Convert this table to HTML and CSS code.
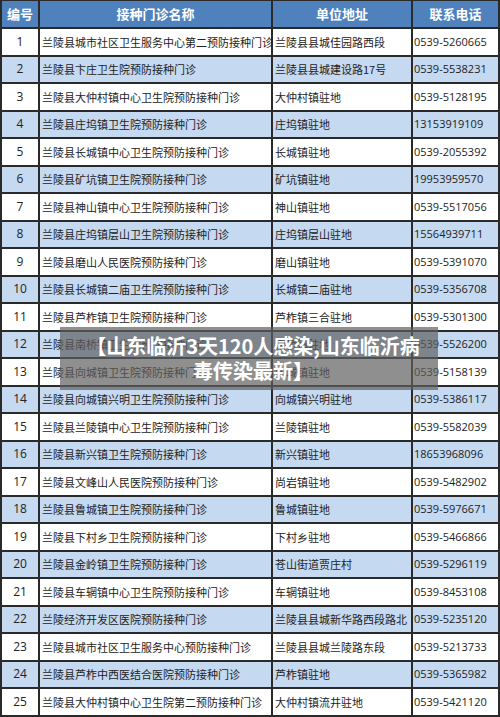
FILE: index.html
```html
<!DOCTYPE html>
<html lang="zh-CN">
<head>
    <meta charset="UTF-8">
    <meta name="viewport" content="width=device-width, initial-scale=1.0">
    <title>兰陵县预防接种门诊</title>
    <link rel="stylesheet" href="styles.css">
</head>
<body>
    <div class="page">
        <table class="clinics">
            <colgroup>
                <col class="c-no">
                <col class="c-name">
                <col class="c-addr">
                <col class="c-tel">
            </colgroup>
            <thead>
                <tr>
                    <th>编号</th>
                    <th>接种门诊名称</th>
                    <th>单位地址</th>
                    <th>联系电话</th>
                </tr>
            </thead>
            <tbody>
                <tr><td class="no">1</td><td>兰陵县城市社区卫生服务中心第二预防接种门诊</td><td>兰陵县县城佳园路西段</td><td class="tel">0539-5260665</td></tr>
                <tr><td class="no">2</td><td>兰陵县卞庄卫生院预防接种门诊</td><td>兰陵县县城建设路17号</td><td class="tel">0539-5538231</td></tr>
                <tr><td class="no">3</td><td>兰陵县大仲村镇中心卫生院预防接种门诊</td><td>大仲村镇驻地</td><td class="tel">0539-5128195</td></tr>
                <tr><td class="no">4</td><td>兰陵县庄坞镇卫生院预防接种门诊</td><td>庄坞镇驻地</td><td class="tel">13153919109</td></tr>
                <tr><td class="no">5</td><td>兰陵县长城镇中心卫生院预防接种门诊</td><td>长城镇驻地</td><td class="tel">0539-2055392</td></tr>
                <tr><td class="no">6</td><td>兰陵县矿坑镇卫生院预防接种门诊</td><td>矿坑镇驻地</td><td class="tel">19953959570</td></tr>
                <tr><td class="no">7</td><td>兰陵县神山镇中心卫生院预防接种门诊</td><td>神山镇驻地</td><td class="tel">0539-5517056</td></tr>
                <tr><td class="no">8</td><td>兰陵县庄坞镇层山卫生院预防接种门诊</td><td>庄坞镇层山驻地</td><td class="tel">15564939711</td></tr>
                <tr><td class="no">9</td><td>兰陵县磨山人民医院预防接种门诊</td><td>磨山镇驻地</td><td class="tel">0539-5391070</td></tr>
                <tr><td class="no">10</td><td>兰陵县长城镇二庙卫生院预防接种门诊</td><td>长城镇二庙驻地</td><td class="tel">0539-5356708</td></tr>
                <tr><td class="no">11</td><td>兰陵县芦柞镇卫生院预防接种门诊</td><td>芦柞镇三合驻地</td><td class="tel">0539-5301300</td></tr>
                <tr><td class="no">12</td><td>兰陵县南桥镇卫生院预防接种门诊</td><td>南桥镇驻地</td><td class="tel">0539-5526200</td></tr>
                <tr><td class="no">13</td><td>兰陵县向城镇卫生院预防接种门诊</td><td>向城镇驻地</td><td class="tel">0539-5158139</td></tr>
                <tr><td class="no">14</td><td>兰陵县向城镇兴明卫生院预防接种门诊</td><td>向城镇兴明驻地</td><td class="tel">0539-5386117</td></tr>
                <tr><td class="no">15</td><td>兰陵县兰陵镇中心卫生院预防接种门诊</td><td>兰陵镇驻地</td><td class="tel">0539-5582039</td></tr>
                <tr><td class="no">16</td><td>兰陵县新兴镇卫生院预防接种门诊</td><td>新兴镇驻地</td><td class="tel">18653968096</td></tr>
                <tr><td class="no">17</td><td>兰陵县文峰山人民医院预防接种门诊</td><td>尚岩镇驻地</td><td class="tel">0539-5482902</td></tr>
                <tr><td class="no">18</td><td>兰陵县鲁城镇卫生院预防接种门诊</td><td>鲁城镇驻地</td><td class="tel">0539-5976671</td></tr>
                <tr><td class="no">19</td><td>兰陵县下村乡卫生院预防接种门诊</td><td>下村乡驻地</td><td class="tel">0539-5466866</td></tr>
                <tr><td class="no">20</td><td>兰陵县金岭镇卫生院预防接种门诊</td><td>苍山街道贾庄村</td><td class="tel">0539-5296119</td></tr>
                <tr><td class="no">21</td><td>兰陵县车辋镇中心卫生院预防接种门诊</td><td>车辋镇驻地</td><td class="tel">0539-8453108</td></tr>
                <tr><td class="no">22</td><td>兰陵经济开发区医院预防接种门诊</td><td>兰陵县县城新华路西段路北</td><td class="tel">0539-5235120</td></tr>
                <tr><td class="no">23</td><td>兰陵县城市社区卫生服务中心预防接种门诊</td><td>兰陵县县城兰陵路东段</td><td class="tel">0539-5213733</td></tr>
                <tr><td class="no">24</td><td>兰陵县芦柞中西医结合医院预防接种门诊</td><td>芦柞镇驻地</td><td class="tel">0539-5365982</td></tr>
                <tr><td class="no">25</td><td>兰陵县大仲村镇中心卫生院第二预防接种门诊</td><td>大仲村镇流井驻地</td><td class="tel">0539-5421120</td></tr>
            </tbody>
        </table>

        <div class="caption">【山东临沂3天120人感染,山东临沂病<br>毒传染最新】</div>
    </div>
</body>
</html>
```

FILE: styles.css
```css
body {
    margin: 0;
    background: #ffffff;
    font-family: "Noto Sans CJK SC", "Noto Sans", sans-serif;
    color: #222;
}
.page {
    position: relative;
    width: 500px;
    height: 717px;
    overflow: hidden;
}
.clinics {
    border-collapse: collapse;
    table-layout: fixed;
    width: 498px;
    margin-top: -1px;
}
.c-no { width: 38px; }
.c-name { width: 233px; }
.c-addr { width: 140px; }
.c-tel { width: 87px; }
.clinics th,
.clinics td {
    border: 2px solid #2a2a2a;
    padding: 0 2px;
    white-space: nowrap;
    font-size: 11px;
    line-height: 14px;
    text-align: left;
}
.clinics thead tr { height: 28px; }
.clinics tbody tr { height: 27.5px; }
.clinics th {
    background: #4f81bd;
    color: #ffffff;
    font-size: 13px;
    font-weight: bold;
    text-align: center;
}
.clinics tbody tr:nth-child(even) { background: #c5d9f1; }
.clinics td.no { text-align: center; font-family: "Open Sans", sans-serif; font-size: 12px; }
.clinics td.tel {
    font-family: "Open Sans", sans-serif;
    font-size: 11px;
    padding-left: 1px;
}
.caption {
    position: absolute;
    left: 60px;
    top: 327px;
    width: 378px;
    height: 63px;
    box-sizing: border-box;
    padding: 6px 0 0 8px;
    background: rgba(95, 95, 95, 0.7);
    color: #ffffff;
    font-size: 20px;
    font-weight: bold;
    line-height: 25px;
    text-align: center;
}
```
